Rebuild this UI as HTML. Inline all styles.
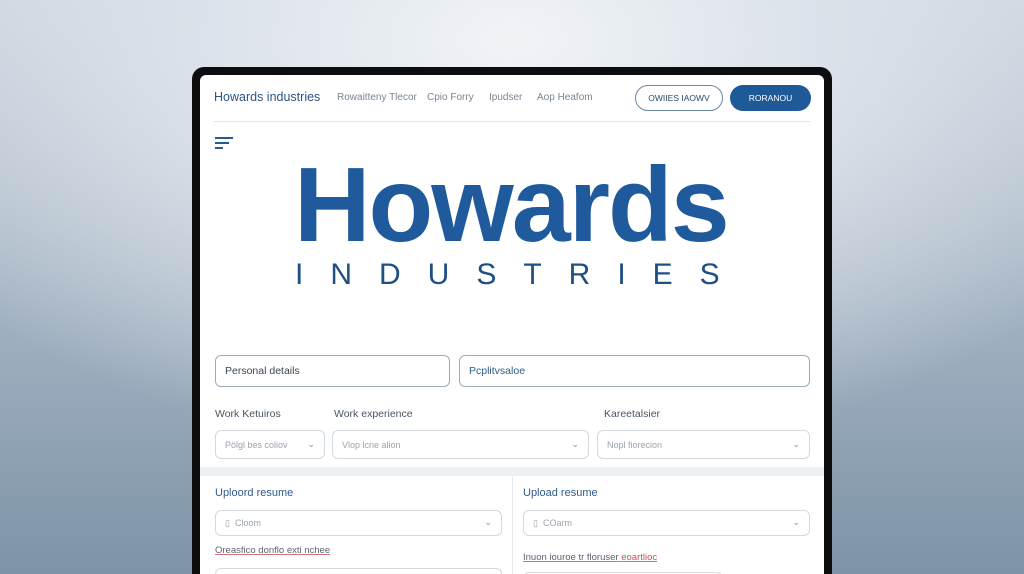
<!DOCTYPE html>
<html style="width:1024px;height:574px;overflow:hidden"><head><meta charset="utf-8"><style>
*{margin:0;padding:0;box-sizing:border-box}
body{width:1024px;height:574px;overflow:hidden;position:relative;font-family:"Liberation Sans",sans-serif;
background:radial-gradient(ellipse 700px 420px at 512px 40px,#f1f4f7 0%,#dbe2e9 45%,rgba(180,195,210,0) 100%),linear-gradient(#c9d3dd 0%,#a9b8c7 45%,#7e93a8 100%);}
.a{position:absolute}
.frame{left:192px;top:67px;width:640px;height:520px;background:#0c0d0f;border-radius:12px}
.scr{left:200px;top:75px;width:624px;height:510px;background:#fff;border-radius:6px 6px 0 0}
.nav{font-size:10px;color:#7a8591;top:92px}
.box{border:1px solid #d3d9df;border-radius:6px;background:#fff}
.ph{font-size:9px;color:#9aa3ad}
.chev{font-size:9px;color:#8a95a0}
.lab{font-size:10.5px;color:#4a5560}
.up{font-size:11px;color:#2d5b8a}
</style></head><body>
<div class="a frame"></div>
<div class="a scr"></div>
<div class="a" style="left:214px;top:90px;font-size:12.5px;color:#2a5584">Howards industries</div>
<div class="a nav" style="left:337px">Rowaitteny Tlecor</div>
<div class="a nav" style="left:427px">Cpio Forry</div>
<div class="a nav" style="left:489px">Ipudser</div>
<div class="a nav" style="left:537px">Aop Heafom</div>
<div class="a" style="left:635px;top:85px;width:88px;height:26px;border:1px solid #6a86a3;border-radius:13px;font-size:8.5px;color:#2a4a6a;text-align:center;line-height:24px">OWIIES IAOWV</div>
<div class="a" style="left:730px;top:85px;width:81px;height:26px;background:#1f5a98;border-radius:13px;font-size:8.5px;color:#fff;text-align:center;line-height:26px">RORANOU</div>
<div class="a" style="left:214px;top:121px;width:596px;height:1px;background:#e2e6ea"></div>
<div class="a" style="left:215px;top:137px;width:18px;height:2px;background:#2a5a8e"></div>
<div class="a" style="left:215px;top:142px;width:14px;height:2px;background:#2a5a8e"></div>
<div class="a" style="left:215px;top:147px;width:8px;height:2px;background:#2a5a8e"></div>
<div class="a" style="left:294px;top:152px;font-size:106px;font-weight:bold;color:#1e5a9c;letter-spacing:-2px;line-height:106px;white-space:nowrap">Howards</div>
<div class="a" style="left:295px;top:259px;font-size:30px;color:#1e4f85;letter-spacing:27px;line-height:32px;white-space:nowrap">INDUSTRIES</div>
<div class="a box" style="left:215px;top:355px;width:235px;height:32px;border-color:#9aabbd;line-height:30px;padding-left:9px;font-size:10.5px;color:#3a4550">Personal details</div>
<div class="a box" style="left:459px;top:355px;width:351px;height:32px;border-color:#9aabbd;line-height:30px;padding-left:9px;font-size:10.5px;color:#2d5b8a">Pcplitvsaloe</div>
<div class="a lab" style="left:215px;top:408px">Work Ketuiros</div>
<div class="a lab" style="left:334px;top:408px">Work experience</div>
<div class="a lab" style="left:604px;top:408px">Kareetalsier</div>
<div class="a box" style="left:215px;top:430px;width:110px;height:29px"><span class="a ph" style="left:9px;top:9px">Pölgl bes coliov</span><span class="a chev" style="right:9px;top:8px">⌄</span></div>
<div class="a box" style="left:332px;top:430px;width:257px;height:29px"><span class="a ph" style="left:9px;top:9px">Vlop lcne alion</span><span class="a chev" style="right:9px;top:8px">⌄</span></div>
<div class="a box" style="left:597px;top:430px;width:213px;height:29px"><span class="a ph" style="left:9px;top:9px">Nopl fiorecion</span><span class="a chev" style="right:9px;top:8px">⌄</span></div>
<div class="a" style="left:200px;top:467px;width:624px;height:9px;background:#eef1f4"></div>
<div class="a" style="left:512px;top:476px;width:1px;height:100px;background:#e6e9ec"></div>
<div class="a up" style="left:215px;top:487px">Uploord resume</div>
<div class="a up" style="left:523px;top:487px">Upload resume</div>
<div class="a box" style="left:215px;top:510px;width:287px;height:26px"><span class="a ph" style="left:9px;top:7px">▯ &nbsp;Cloom</span><span class="a chev" style="right:9px;top:6px">⌄</span></div>
<div class="a box" style="left:523px;top:510px;width:287px;height:26px"><span class="a ph" style="left:9px;top:7px">▯ &nbsp;COarm</span><span class="a chev" style="right:9px;top:6px">⌄</span></div>
<div class="a" style="left:215px;top:545px;font-size:9.5px;color:#5a6470;text-decoration:underline;text-decoration-color:#d47080">Oreasfico donflo exti nchee</div>
<div class="a" style="left:523px;top:552px;font-size:9.5px;color:#5a6470;text-decoration:underline;text-decoration-color:#d47080">Inuon iouroe tr floruser <span style="color:#c8505e">eoartlioc</span></div>
<div class="a box" style="left:215px;top:568px;width:287px;height:16px;border-bottom:none;border-radius:6px 6px 0 0"></div>
<div class="a box" style="left:523px;top:572px;width:200px;height:12px;border-bottom:none;border-radius:6px 6px 0 0"></div>
</body></html>
